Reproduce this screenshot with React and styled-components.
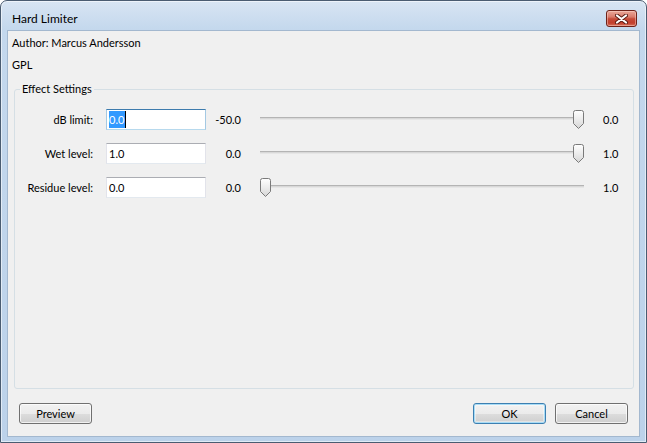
import React from 'react'
import styled, { createGlobalStyle } from 'styled-components'

const GlobalStyle = createGlobalStyle`
    html, body {
        margin: 0;
        padding: 0;
        background: #ffffff;
    }
    * {
        box-sizing: border-box;
    }
`

const settings = [
    { label: 'dB limit:', value: '0.0', min: '-50.0', max: '0.0', pos: 1, focused: true },
    { label: 'Wet level:', value: '1.0', min: '0.0', max: '1.0', pos: 1 },
    { label: 'Residue level:', value: '0.0', min: '0.0', max: '1.0', pos: 0 },
]

export default function App () {
    return (
        <>
        <GlobalStyle />
        <Window>
            <TitleBar>
                <Title>Hard Limiter</Title>
                <CloseButton>
                    <svg width="13" height="10" viewBox="0 0 13 10">
                        <path d="M2 1.5 L11 8.5 M11 1.5 L2 8.5" stroke="#5a1a12" strokeWidth="4" strokeLinecap="round" />
                        <path d="M2 1.5 L11 8.5 M11 1.5 L2 8.5" stroke="#ffffff" strokeWidth="2.2" strokeLinecap="round" />
                    </svg>
                </CloseButton>
            </TitleBar>
            <Client>
                <Info>Author: Marcus Andersson</Info>
                <Info>GPL</Info>
                <Group>
                    <Legend>Effect Settings</Legend>
                    <SettingsGrid>
                        {settings.map(item => <SettingRow key={item.label} {...item} />)}
                    </SettingsGrid>
                </Group>
                <ButtonBar>
                    <Button>Preview</Button>
                    <Spacer />
                    <Button $default>OK</Button>
                    <Button>Cancel</Button>
                </ButtonBar>
            </Client>
        </Window>
        </>
    )
}

const SettingRow = ({ label, value, min, max, pos, focused }) => (
    <>
        <Label>{label}</Label>
        <TextField $focused={focused}>
            {focused ? <><Selected>{value}</Selected><Caret /></> : value}
        </TextField>
        <MinValue>{min}</MinValue>
        <Slider>
            <Track />
            <Thumb style={{ left: `calc(${pos} * (100% - 11px))` }}>
                <svg width="11" height="19" viewBox="0 0 11 19">
                    <defs>
                        <linearGradient id="thumbFill" x1="0" y1="0" x2="0" y2="1">
                            <stop offset="0" stopColor="#ffffff" />
                            <stop offset="0.5" stopColor="#ececec" />
                            <stop offset="1" stopColor="#d6d6d6" />
                        </linearGradient>
                    </defs>
                    <path d="M0.5 2.5 Q0.5 0.5 2.5 0.5 H8.5 Q10.5 0.5 10.5 2.5 V13.5 L5.5 18.5 L0.5 13.5 Z"
                        fill="url(#thumbFill)" stroke="#7a7a7a" />
                </svg>
            </Thumb>
        </Slider>
        <MaxValue>{max}</MaxValue>
    </>
)

const Window = styled.div`
    width: 647px;
    height: 443px;
    display: flex;
    flex-direction: column;
    border: 1px solid #4a5c71;
    border-radius: 7px 7px 0 0;
    background: linear-gradient(#d8e5f3 0px, #c4d8ed 28px, #bcd2ea 100%);
    box-shadow: inset 0 0 0 1px rgba(255, 255, 255, 0.55);
    font-family: "Segoe UI", Lato, sans-serif;
    font-size: 11px;
    color: #000;
`

const TitleBar = styled.div`
    height: 29px;
    display: flex;
    align-items: center;
    padding: 6px 9px 0 11px;
`

const Title = styled.span`
    font-size: 12px;
    color: #000;
`

const CloseButton = styled.div`
    margin-left: auto;
    width: 31px;
    height: 17px;
    display: flex;
    align-items: center;
    justify-content: center;
    border: 1px solid #6e2219;
    border-radius: 3px;
    background: linear-gradient(#eaa899 0%, #d97b6b 40%, #c54a38 52%, #c23f2d 80%, #d8735d 100%);
    box-shadow: inset 0 0 0 1px rgba(255, 220, 210, 0.45);
`

const Client = styled.div`
    flex: 1;
    margin: 0 6px 5px 6px;
    display: flex;
    flex-direction: column;
    background: #f0f0f0;
    border: 1px solid #a3b8cf;
    padding: 1px 0 0;
`

const Info = styled.div`
    line-height: 22px;
    padding-left: 4px;
`

const Group = styled.fieldset`
    flex: 1;
    margin: 5px 5px 0 6px;
    padding: 12px 0 0;
    border: 1px solid #d5dfe5;
    border-radius: 3px;
    min-width: 0;
`

const Legend = styled.legend`
    margin-left: 5px;
    padding: 0 2px;
    line-height: 16px;
`

const SettingsGrid = styled.div`
    display: grid;
    grid-template-columns: 91px 100px 35px 343px 1fr;
    grid-auto-rows: 21px;
    row-gap: 13px;
    align-items: center;
`

const Label = styled.div`
    text-align: right;
    padding-right: 13px;
`

const TextField = styled.div`
    height: 21px;
    display: flex;
    align-items: center;
    padding-left: 2px;
    background: #fff;
    border: 1px solid;
    border-color: ${p => p.$focused
        ? '#3d7bad #a4c9e3 #b7d9ed #a4c9e3'
        : '#abadb3 #e2e3ea #e3e9ef #e2e3ea'};
`

const Selected = styled.span`
    background: #3399ff;
    color: #fff;
    line-height: 17px;
    padding-right: 1px;
`

const Caret = styled.span`
    width: 1px;
    height: 17px;
    background: #000;
`

const MinValue = styled.div`
    text-align: right;
`

const Slider = styled.div`
    position: relative;
    height: 21px;
    margin-left: 19px;
`

const Track = styled.div`
    position: absolute;
    left: 0;
    right: 0;
    top: 8px;
    height: 3px;
    border-top: 1px solid #b4b4b4;
    border-bottom: 1px solid #e6e6e6;
    background: #d8d8d8;
`

const Thumb = styled.div`
    position: absolute;
    top: 1px;
    width: 11px;
    height: 19px;
    display: flex;
`

const MaxValue = styled.div`
    padding-left: 19px;
`

const ButtonBar = styled.div`
    display: flex;
    gap: 9px;
    padding: 14px 11px 12px 11px;
`

const Spacer = styled.div`
    flex: 1;
`

const Button = styled.button`
    width: 73px;
    height: 21px;
    padding: 0;
    font-family: inherit;
    font-size: 11px;
    color: #000;
    border: 1px solid ${p => p.$default ? '#3c7fb1' : '#707070'};
    border-radius: 3px;
    background: linear-gradient(#f2f2f2 0%, #ebebeb 50%, #dddddd 51%, #cfcfcf 100%);
    box-shadow: ${p => p.$default
        ? 'inset 0 0 0 1px #a8dcf6, inset 0 0 0 2px rgba(255,255,255,0.4)'
        : 'inset 0 0 0 1px rgba(255,255,255,0.7)'};
`
